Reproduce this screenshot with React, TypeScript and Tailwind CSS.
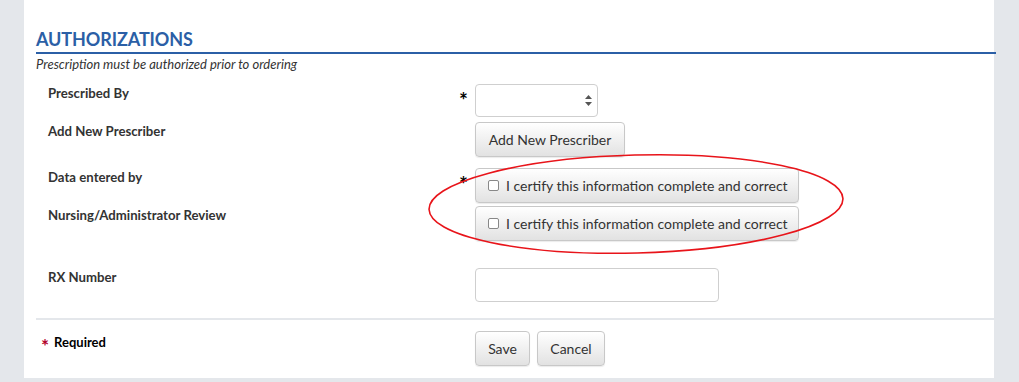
import React from "react";

const btn =
  "rounded-[4px] border border-[#c8c8c8] bg-gradient-to-b from-[#ffffff] to-[#e2e2e2] text-[#333] shadow-[0_1px_1px_rgba(0,0,0,0.08)]";

function Star() {
  return (
    <span className="w-[16px] text-[21px] font-bold text-black leading-none pt-[5px] pl-[0px]">*</span>
  );
}

function Row({
  label,
  star,
  children,
  className = "",
}: {
  label: string;
  star?: boolean;
  children: React.ReactNode;
  className?: string;
}) {
  return (
    <div className={"flex items-start " + className}>
      <div className="w-[423px] pl-[12px] pt-0 text-[13.2px] font-bold text-[#333] leading-[18px]">
        {label}
      </div>
      <div className="w-[16px] flex">{star ? <Star /> : null}</div>
      {children}
    </div>
  );
}

function Certify() {
  return (
    <button className={btn + " w-[324px] h-[35px] flex items-center pl-[12px] text-[14px]"}>
      <span className="w-[11px] h-[11px] border border-[#888] rounded-[2px] bg-white mr-[7px]" />
      I certify this information complete and correct
    </button>
  );
}

export default function App() {
  return (
    <div
      className="w-[1019px] h-[382px] bg-[#e4e7eb] relative overflow-hidden"
      style={{ fontFamily: "Lato, 'Open Sans', sans-serif" }}
    >
      <div className="ml-[24px] w-[970px] h-[378px] bg-white pl-[12px] pt-[27px]">
        <div className="text-[18px] font-bold text-[#2b5fa6] leading-[24px] tracking-[-0.1px]">
          AUTHORIZATIONS
        </div>
        <div className="mt-[1px] h-[2px] bg-[#2b5fa6] w-[960px]" />
        <div className="mt-[2px] text-[13px] italic text-[#333] leading-[16px]">
          Prescription must be authorized prior to ordering
        </div>
        <Row label="Prescribed By" star className="mt-[12px]">
          <div className="w-[123px] h-[33px] rounded-[4px] border border-[#cfcfcf] bg-white flex items-center justify-end pr-[5px]">
            <svg width="7" height="11" viewBox="0 0 7 11">
              <path d="M3.5 0 L7 4 L0 4 Z" fill="#555" />
              <path d="M3.5 11 L7 7 L0 7 Z" fill="#555" />
            </svg>
          </div>
        </Row>
        <Row label="Add New Prescriber" className="mt-[5px]">
          <button className={btn + " w-[150px] h-[35px] text-[14px]"}>Add New Prescriber</button>
        </Row>
        <Row label="Data entered by" star className="mt-[11px]">
          <Certify />
        </Row>
        <Row label="Nursing/Administrator Review" className="mt-[3px]">
          <Certify />
        </Row>
        <Row label="RX Number" className="mt-[27px]">
          <div className="w-[244px] h-[34px] rounded-[4px] border border-[#cfcfcf] bg-white" />
        </Row>
        <div className="mt-[16px] h-[2px] bg-[#e4e7eb] w-[958px]" />
        <div className="flex items-start mt-[11px]">
          <div className="w-[439px] pl-[5px] pt-0 flex items-center text-[13px] font-bold text-black">
            <span className="text-[#b2002a] text-[19px] mr-[5px] leading-none pt-[5px]">*</span>
            Required
          </div>
          <button className={btn + " w-[55px] h-[35px] text-[14px]"}>Save</button>
          <button className={btn + " w-[68px] h-[35px] text-[14px] ml-[7px]"}>Cancel</button>
        </div>
      </div>
      <svg
        className="absolute left-0 top-0 pointer-events-none"
        width="1019"
        height="382"
        viewBox="0 0 1019 382"
      >
        <ellipse
          cx="636"
          cy="204"
          rx="207"
          ry="49"
          fill="none"
          stroke="#e8141a"
          strokeWidth="1.6"
          transform="rotate(-1.5 636 204)"
        />
      </svg>
    </div>
  );
}
